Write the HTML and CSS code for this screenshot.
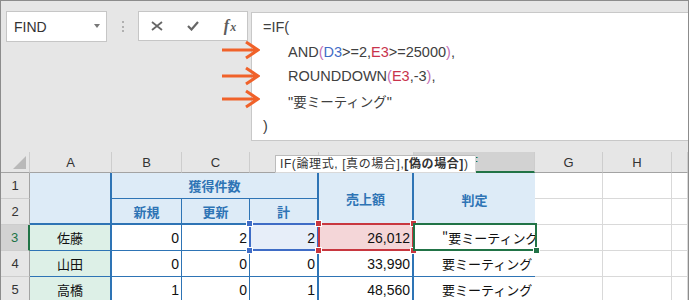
FILE: index.html
```html
<!DOCTYPE html>
<html lang="ja">
  <head>
    <meta charset="UTF-8" />
    <title>IF / AND / ROUNDDOWN</title>
    <link rel="stylesheet" href="styles.css">
  </head>
  <body>
    <div class="frame">
      <div class="toolbar">
        <div class="namebox"><span>FIND</span><span class="caret"></span></div>
        <div class="grip"><i></i><i></i><i></i></div>
        <div class="actions">
          <svg width="12" height="10" viewBox="0 0 12 10"><path d="M1 1 L11 9 M11 1 L1 9" stroke="#666" stroke-width="1.8" fill="none" /></svg>
          <svg width="12" height="10" viewBox="0 0 12 10"><path d="M1 5 L4.5 8.5 L11 1" stroke="#666" stroke-width="2.2" fill="none" /></svg>
          <span class="fx"><i>f</i><i class="x">x</i></span>
        </div>
        <div class="formula">
          <div>=IF(</div>
          <div class="indent">AND<span class="p2">(</span><span class="ref1">D3</span>&gt;=2,<span class="ref2">E3</span>&gt;=25000<span class="p2">)</span>,</div>
          <div class="indent">ROUNDDOWN<span class="p2">(</span><span class="ref2">E3</span>,-3<span class="p2">)</span>,</div>
          <div class="indent">"<span class="jp">要ミーティング</span>"</div>
          <div>)</div>
        </div>

        <svg class="arrow a1" width="38" height="20" viewBox="0 0 38 20"><path d="M0 10 H35 M24 2 L36 10 L24 18" stroke="#f0622a" stroke-width="3" fill="none" /></svg>
        <svg class="arrow a2" width="38" height="20" viewBox="0 0 38 20"><path d="M0 10 H35 M24 2 L36 10 L24 18" stroke="#f0622a" stroke-width="3" fill="none" /></svg>
        <svg class="arrow a3" width="38" height="20" viewBox="0 0 38 20"><path d="M0 10 H35 M24 2 L36 10 L24 18" stroke="#f0622a" stroke-width="3" fill="none" /></svg>
      </div>

      <div class="sheet">
        <div class="ch corner"></div>
        <div class="ch">A</div>
        <div class="ch">B</div>
        <div class="ch">C</div>
        <div class="ch"></div>
        <div class="ch"></div>
        <div class="ch on">F</div>
        <div class="ch">G</div>
        <div class="ch">H</div>
        <div class="ch"></div>

        <!-- row 1 -->
        <div class="rh">1</div>
        <div class="hd a12"></div>
        <div class="hd bd1">獲得件数</div>
        <div class="hd e12">売上額</div>
        <div class="hd f12">判定</div>
        <div class="c"></div>
        <div class="c"></div>
        <div class="c"></div>

        <!-- row 2 -->
        <div class="rh">2</div>
        <div class="hd thin">新規</div>
        <div class="hd thin">更新</div>
        <div class="hd thick">計</div>
        <div class="c"></div>
        <div class="c"></div>
        <div class="c"></div>

        <!-- row 3 -->
        <div class="rh on">3</div>
        <div class="nm">佐藤</div>
        <div class="n thin">0</div>
        <div class="n thin">2</div>
        <div class="n thick sel-b">2<span class="box"><i class="h tl"></i><i class="h bl"></i></span></div>
        <div class="n thick sel-r">26,012<span class="box"><i class="h tl"></i><i class="h tr"></i><i class="h bl"></i><i class="h br"></i></span></div>
        <div class="t sel-g"><span class="txt">"要ミーティング"</span><span class="box"><i class="fill"></i></span></div>
        <div class="c"></div>
        <div class="c"></div>
        <div class="c"></div>

        <!-- row 4 -->
        <div class="rh">4</div>
        <div class="nm">山田</div>
        <div class="n thin">0</div>
        <div class="n thin">0</div>
        <div class="n thick">0</div>
        <div class="n thick">33,990</div>
        <div class="t"><span class="txt">要ミーティング</span></div>
        <div class="c"></div>
        <div class="c"></div>
        <div class="c"></div>

        <!-- row 5 -->
        <div class="rh">5</div>
        <div class="nm">高橋</div>
        <div class="n thin">1</div>
        <div class="n thin">0</div>
        <div class="n thick">1</div>
        <div class="n thick">48,560</div>
        <div class="t"><span class="txt">要ミーティング</span></div>
        <div class="c"></div>
        <div class="c"></div>
        <div class="c"></div>

        <div class="tip">IF(論理式, [真の場合], <b>[偽の場合]</b>)</div>
      </div>
    </div>
  </body>
</html>
```

FILE: styles.css
```css
* {
  box-sizing: border-box;
}

body {
  margin: 0;
  background: #fff;
  font-family: "Liberation Sans", "Noto Sans CJK JP", sans-serif;
  color: #222;
}

.frame {
  width: 689px;
  height: 300px;
  border: 1px solid #8c8c8c;
  border-bottom: none;
  overflow: hidden;
}

/* formula bar */
.toolbar {
  position: relative;
  display: flex;
  align-items: flex-start;
  height: 151px;
  padding: 10px 0 0 5px;
  background: #e6e6e6;
}

.namebox {
  display: flex;
  align-items: center;
  justify-content: space-between;
  width: 101px;
  height: 31px;
  padding: 0 6px 0 7px;
  background: #fff;
  border: 1px solid #c6c6c6;
  font-size: 14px;
  color: #333;
}

.caret {
  width: 0;
  height: 0;
  border-left: 3px solid transparent;
  border-right: 3px solid transparent;
  border-top: 4px solid #777;
  margin-top: -2px;
}

.grip {
  display: flex;
  flex-direction: column;
  align-items: center;
  justify-content: center;
  gap: 2.5px;
  width: 31px;
  height: 31px;
}

.grip i {
  width: 2px;
  height: 2px;
  background: #b0b0b0;
}

.actions {
  display: grid;
  grid-template-columns: repeat(3, 1fr);
  align-items: center;
  justify-items: center;
  width: 110px;
  height: 30px;
  background: #fff;
  border: 1px solid #c6c6c6;
}

.fx {
  font-family: "Liberation Serif", serif;
  font-weight: bold;
  color: #5c5c5c;
  line-height: 1;
  margin-left: 2px;
}

.fx i {
  font-size: 16px;
  font-style: italic;
}

.fx .x {
  font-size: 12px;
  margin-left: 1px;
}

.formula {
  flex: 1;
  height: 129px;
  margin-left: 3px;
  margin-top: 1px;
  padding: 2px 0 0 11px;
  background: #fff;
  border: 1px solid #c8c8c8;
  border-right: none;
  font-size: 14.5px;
  line-height: 24.5px;
  color: #404040;
}

.formula .indent {
  padding-left: 25px;
}

.formula .jp {
  font-family: "Noto Sans CJK JP", sans-serif;
  font-size: 13.5px;
}

.p2 {
  color: #c56fb4;
}

.ref1 {
  color: #3f6cc6;
}

.ref2 {
  color: #c8334c;
}

.arrow {
  position: absolute;
  left: 221px;
}

.a1 {
  top: 39px;
}

.a2 {
  top: 65px;
}

.a3 {
  top: 88px;
}

/* sheet */
.sheet {
  position: relative;
  display: grid;
  grid-template-columns: 29px 82px 70px 68px 69px 95px 121px 68px 69px 1fr;
  grid-template-rows: 21px repeat(5, 26px);
  font-size: 14px;
}

.sheet > div {
  display: flex;
  align-items: center;
  border-right: 1px solid #d9d9d9;
  border-bottom: 1px solid #d9d9d9;
  background: #fff;
  white-space: nowrap;
}

.sheet > .ch {
  justify-content: center;
  background: #e6e6e6;
  border-right-color: #cdcdcd;
  border-bottom-color: #a3a3a3;
  font-size: 13px;
  color: #333;
}

.sheet > .corner {
  position: relative;
}

.corner::after {
  content: "";
  position: absolute;
  right: 3px;
  bottom: 3px;
  width: 13px;
  height: 13px;
  background: #b9b9b9;
  clip-path: polygon(100% 0, 100% 100%, 0 100%);
}

.sheet > .rh {
  justify-content: center;
  background: #e6e6e6;
  border-right-color: #a3a3a3;
  border-bottom-color: #cdcdcd;
  font-size: 13px;
  color: #333;
}

.sheet > .ch.on {
  background: #d2d2d2;
  border-bottom: 2px solid #217346;
  color: #217346;
}

.sheet > .rh.on {
  background: #d2d2d2;
  border-right: 2px solid #217346;
  color: #217346;
}

/* table */
.sheet > .hd {
  justify-content: center;
  background: #ddebf7;
  font-family: "Noto Sans CJK JP", sans-serif;
  font-size: 13px;
  font-weight: bold;
  color: #2e74b5;
  border-bottom: 2px solid #2e74b5;
}

.sheet > .a12 {
  grid-row: 2 / 4;
  grid-column: 2;
  border-right: 2px solid #2e74b5;
}

.sheet > .bd1 {
  grid-row: 2;
  grid-column: 3 / 6;
  border-right: 2px solid #2e74b5;
  border-bottom: 1px solid #2e74b5;
}

.sheet > .e12 {
  grid-row: 2 / 4;
  grid-column: 6;
  border-right: 2px solid #2e74b5;
}

.sheet > .f12 {
  grid-row: 2 / 4;
  grid-column: 7;
  border-right: none;
  border-bottom: none;
}

.sheet > .thin {
  border-right: 1px solid #2e74b5;
}

.sheet > .thick {
  border-right: 2px solid #2e74b5;
}

.sheet > .nm {
  justify-content: center;
  background: #ddf0e7;
  font-family: "Noto Sans CJK JP", sans-serif;
  font-size: 13px;
  color: #111;
  border-right: 2px solid #2e74b5;
  border-bottom: 1px solid #2e74b5;
}

.sheet > .n {
  justify-content: flex-end;
  padding-right: 2px;
  border-bottom: 1px solid #2e74b5;
  color: #111;
}

.sheet > .t {
  border-right: none;
  border-bottom: 1px solid #2e74b5;
  font-family: "Noto Sans CJK JP", sans-serif;
  font-size: 13px;
  color: #111;
}

.txt {
  display: block;
  width: 100%;
  overflow: hidden;
  padding-left: 28px;
}

/* selections */
.sel-b,
.sel-r,
.sel-g {
  position: relative;
}

.sheet > .sel-b {
  background: #e7eef9;
}

.sheet > .sel-r {
  background: #f4d6d8;
}

.box {
  position: absolute;
  top: -2px;
  left: -1px;
  right: -2px;
  bottom: -1px;
  border: 2px solid #3f6cc6;
}

.sel-r .box {
  border-color: #c8373f;
}

.sel-g .box {
  border-color: #217346;
}

.h {
  position: absolute;
  width: 7px;
  height: 7px;
  background: #3f6cc6;
  border: 1px solid #fff;
}

.sel-r .h {
  background: #c8373f;
}

.tl {
  top: -5px;
  left: -5px;
}

.tr {
  top: -5px;
  right: -5px;
}

.bl {
  bottom: -5px;
  left: -5px;
}

.br {
  bottom: -5px;
  right: -5px;
}

.fill {
  position: absolute;
  right: -5px;
  bottom: -5px;
  width: 7px;
  height: 7px;
  background: #217346;
  border: 1px solid #fff;
}

.tip {
  position: absolute;
  top: 3px;
  left: 274px;
  height: 18px;
  padding: 0 6px 0 4px;
  background: #fff;
  border: 1px solid #bcbcbc;
  font-family: "Liberation Sans", "Noto Sans CJK JP", sans-serif;
  font-size: 12px;
  letter-spacing: 0.6px;
  line-height: 16px;
  color: #333;
  white-space: nowrap;
}
```
